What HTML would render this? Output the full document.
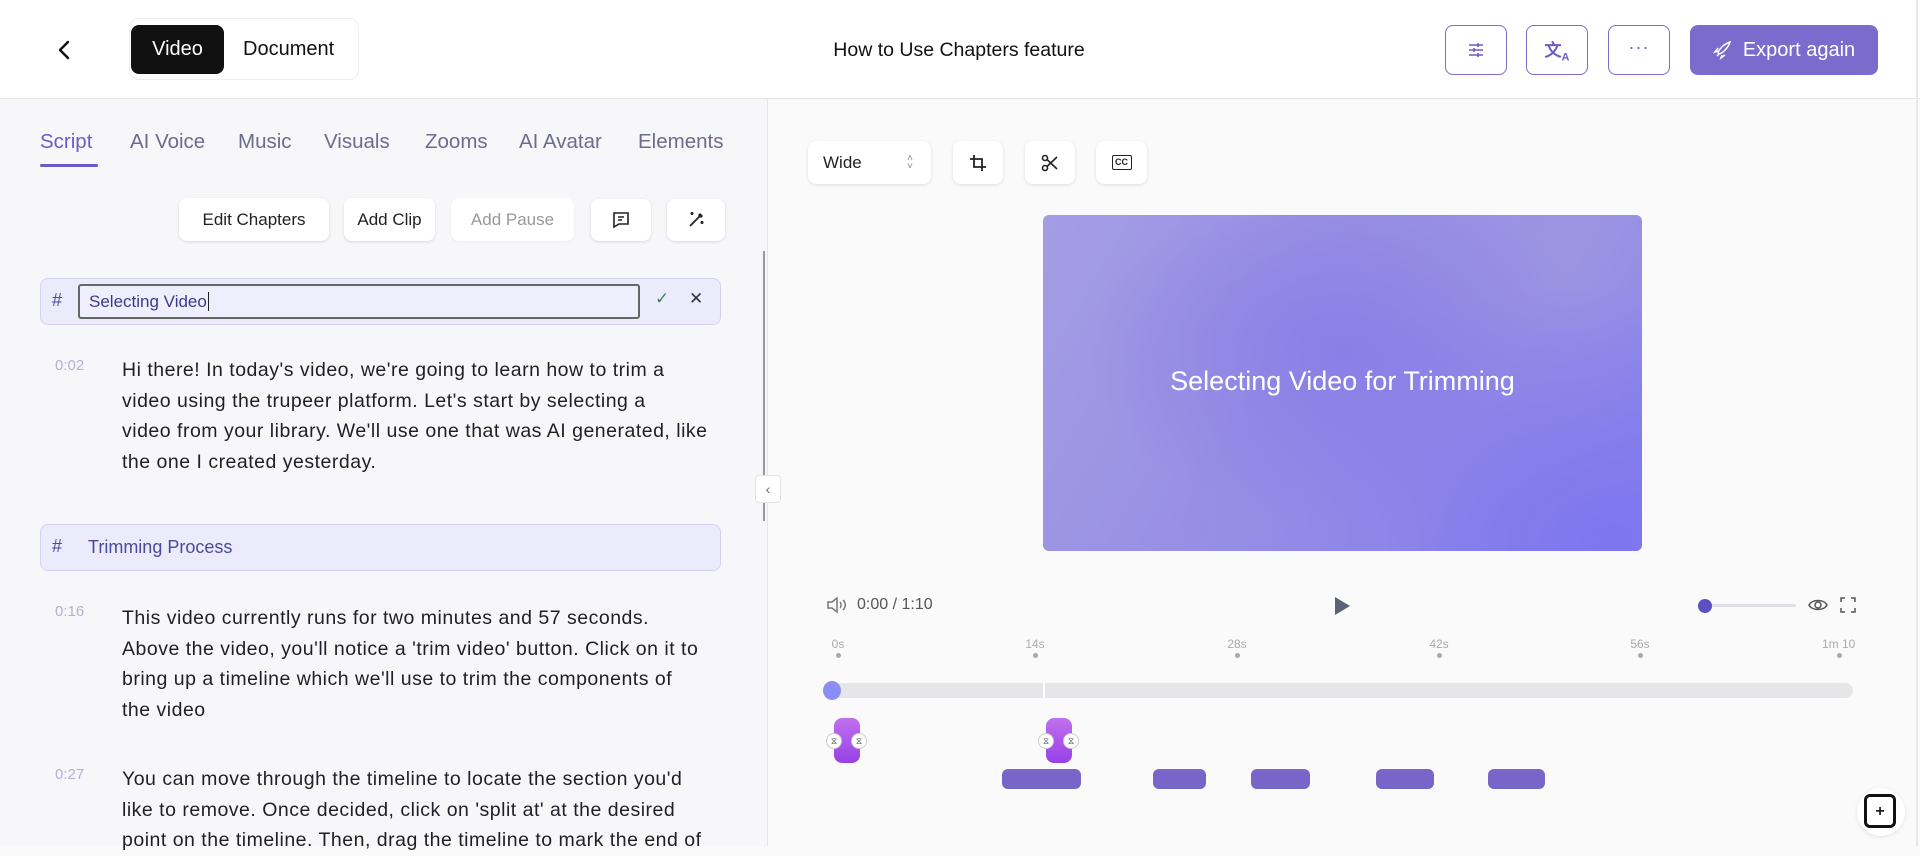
<!DOCTYPE html>
<html><head><meta charset="utf-8"><style>
*{box-sizing:border-box;margin:0;padding:0}
body{width:1920px;height:846px;overflow:hidden;font-family:"Liberation Sans",sans-serif;background:#fafafb;position:relative;color:#1e1e2a}
.a{position:absolute}
.hdr{left:0;top:0;width:1920px;height:99px;background:#fff;border-bottom:1px solid #e6e6ea}
.btn{position:absolute;background:#fff;border-radius:8px;box-shadow:0 1px 3px rgba(0,0,0,.12);display:flex;align-items:center;justify-content:center;font-size:17px;color:#222}
.ob{position:absolute;top:25px;width:62px;height:50px;border:1.5px solid #7a6cc8;border-radius:8px;background:#fff;display:flex;align-items:center;justify-content:center}
.tab{position:absolute;top:130px;font-size:20.5px;color:#6c6c8c}
.p{position:absolute;left:122px;font-size:19.5px;line-height:30.6px;color:#1f1f28;white-space:nowrap;letter-spacing:0.5px}
.ts{position:absolute;left:55px;font-size:15px;color:#b2b2d2}
.ch{position:absolute;left:40px;width:681px;height:47px;background:#ebebfb;border:1px solid #d4d2f4;border-radius:8px}
.tl{position:absolute;top:637px;font-size:12px;color:#aaa;width:40px;text-align:center}
.dot{position:absolute;top:653px;width:5px;height:5px;border-radius:50%;background:#aaa}
.blk{position:absolute;top:769px;height:20px;border-radius:6px;background:#7766c8}
.mk{position:absolute;top:718px;width:26px;height:45px;border-radius:8px;background:linear-gradient(#c071ee,#9840e6)}
.hd{position:absolute;top:733px;width:16px;height:16px;border-radius:50%;background:#fff;border:1px solid #ccc;font-size:9px;text-align:center;line-height:14px;color:#555}
</style></head><body>
<div class="a hdr">
 <svg class="a" style="left:56px;top:40px" width="18" height="20" viewBox="0 0 18 20"><path d="M12 2L4 10l8 8" fill="none" stroke="#111" stroke-width="2.4" stroke-linecap="round" stroke-linejoin="round"/></svg>
 <div class="a" style="left:129px;top:18px;width:230px;height:62px;border:1px solid #eee;border-radius:10px;background:#fff"></div>
 <div class="a" style="left:131px;top:25px;width:93px;height:49px;background:#111;border-radius:8px;color:#fff;font-size:20px;display:flex;align-items:center;justify-content:center">Video</div>
 <div class="a" style="left:243px;top:38px;font-size:20px;color:#111">Document</div>
 <div class="a" style="left:0;width:1918px;top:39px;text-align:center;font-size:19.5px;color:#111">How to Use Chapters feature</div>
 <div class="ob" style="left:1445px"><svg width="20" height="20" viewBox="0 0 20 20" stroke="#6b5bc4" stroke-width="1.6"><path d="M3 5h14M3 10h14M3 15h14"/><path d="M12 3v4M8 8v4M12 13v4"/></svg></div>
 <div class="ob" style="left:1526px"><span style="color:#6b5bc4;font-size:17px;font-weight:bold">文<sub style="font-size:11px">A</sub></span></div>
 <div class="ob" style="left:1608px"><span style="color:#6b5bc4;font-size:18px;letter-spacing:1px;margin-top:-6px">···</span></div>
 <div class="a" style="left:1690px;top:25px;width:188px;height:50px;background:#7a6bcc;border-radius:8px;color:#fff;font-size:20px;display:flex;align-items:center;justify-content:center;gap:10px"><svg width="20" height="20" viewBox="0 0 20 20" fill="none" stroke="#fff" stroke-width="1.5"><path d="M6 14c4-1 9-6 11-12-6 2-11 7-12 11zM5 11l-3 1 3-4M9 15l-1 3 4-3M4 16l2-2"/></svg>Export again</div>
</div>
<div class="a" style="left:1916px;top:0;width:2px;height:846px;background:#e8e8ea"></div>
<div class="a" style="left:767px;top:99px;width:1px;height:747px;background:#e6e6ea"></div>
<div class="a" style="left:0;top:99px;width:767px;height:747px;background:#f7f7f9"></div>
<div class="tab" style="left:40px;color:#6b5bc4">Script</div>
<div class="a" style="left:40px;top:164px;width:58px;height:3px;background:#6b5bc4;border-radius:2px"></div>
<div class="tab" style="left:130px">AI Voice</div>
<div class="tab" style="left:238px">Music</div>
<div class="tab" style="left:324px">Visuals</div>
<div class="tab" style="left:425px">Zooms</div>
<div class="tab" style="left:519px">AI Avatar</div>
<div class="tab" style="left:638px">Elements</div>
<div class="btn" style="left:179px;top:198px;width:150px;height:43px">Edit Chapters</div>
<div class="btn" style="left:344px;top:198px;width:91px;height:43px">Add Clip</div>
<div class="btn" style="left:451px;top:198px;width:123px;height:43px;color:#999;box-shadow:0 1px 2px rgba(0,0,0,.05)">Add Pause</div>
<div class="btn" style="left:591px;top:199px;width:60px;height:42px"><svg width="20" height="20" viewBox="0 0 20 20" fill="none" stroke="#222" stroke-width="1.6"><path d="M3 3h14v11H8l-5 3z"/><path d="M7 7h6M7 10h4"/></svg></div>
<div class="btn" style="left:667px;top:199px;width:58px;height:42px"><svg width="20" height="20" viewBox="0 0 20 20" fill="none" stroke="#222" stroke-width="1.8"><path d="M4 16L14 6"/><path d="M13 4l3 3" stroke-width="3"/><path d="M6 2v3M4.5 3.5h3M16 11v3M14.5 12.5h3"/></svg></div>
<div class="a" style="left:763px;top:251px;width:2px;height:270px;background:#999"></div>
<div class="a" style="left:755px;top:475px;width:26px;height:28px;background:#fff;border:1px solid #e4e4e8;border-radius:4px;font-size:14px;color:#666;text-align:center;line-height:26px">‹</div>
<div class="ch" style="top:278px"></div>
<div class="a" style="left:52px;top:290px;font-size:18px;color:#4a4a9a">#</div>
<div class="a" style="left:78px;top:284px;width:562px;height:35px;border:2px solid #666;border-radius:3px;background:#eeeefc;font-size:17px;color:#3b3b8a;padding:6px 9px">Selecting Video<span style="border-left:1.5px solid #222;margin-left:1px"></span></div>
<div class="a" style="left:655px;top:289px;font-size:17px;color:#3a8a5a">✓</div>
<div class="a" style="left:689px;top:289px;font-size:17px;color:#333">✕</div>
<div class="ts" style="top:357px">0:02</div>
<div class="p" style="top:355px">Hi there! In today's video, we're going to learn how to trim a<br>video using the trupeer platform. Let's start by selecting a<br>video from your library. We'll use one that was AI generated, like<br>the one I created yesterday.</div>
<div class="ch" style="top:524px"></div>
<div class="a" style="left:52px;top:536px;font-size:18px;color:#4a4a9a">#</div>
<div class="a" style="left:88px;top:537px;font-size:18px;color:#4a4a9a">Trimming Process</div>
<div class="ts" style="top:603px">0:16</div>
<div class="p" style="top:603px">This video currently runs for two minutes and 57 seconds.<br>Above the video, you'll notice a 'trim video' button. Click on it to<br>bring up a timeline which we'll use to trim the components of<br>the video</div>
<div class="ts" style="top:766px">0:27</div>
<div class="p" style="top:764px">You can move through the timeline to locate the section you'd<br>like to remove. Once decided, click on 'split at' at the desired<br>point on the timeline. Then, drag the timeline to mark the end of</div>
<div class="btn" style="left:808px;top:141px;width:123px;height:43px;justify-content:flex-start;padding-left:15px">Wide<span style="position:absolute;right:18px;font-size:10px;color:#888;line-height:8px">˄<br>˅</span></div>
<div class="btn" style="left:953px;top:141px;width:50px;height:43px"><svg width="18" height="18" viewBox="0 0 18 18" fill="none" stroke="#222" stroke-width="1.8"><path d="M5 1v12h12M1 5h12v12"/></svg></div>
<div class="btn" style="left:1025px;top:141px;width:50px;height:43px"><svg width="18" height="18" viewBox="0 0 18 18" fill="none" stroke="#222" stroke-width="1.6"><circle cx="4" cy="4" r="2.5"/><circle cx="4" cy="14" r="2.5"/><path d="M6 5.5L16 15M6 12.5L16 3"/></svg></div>
<div class="btn" style="left:1096px;top:141px;width:51px;height:43px"><div style="width:20px;height:15px;border:1.6px solid #222;border-radius:2px;font-size:9px;text-align:center;line-height:12px;font-weight:bold">CC</div></div>
<div class="a" style="left:1043px;top:215px;width:599px;height:336px;border-radius:6px;background:radial-gradient(ellipse at 95% 95%,#7e76ee 0%,rgba(126,118,238,0) 55%),radial-gradient(ellipse at 50% 40%,#8a7fe6 0%,rgba(0,0,0,0) 60%),linear-gradient(120deg,#a49de4,#9990e4 40%,#9c94e2 70%,#8a82ec);display:flex;align-items:center;justify-content:center;color:#fff;font-size:27px;padding-bottom:4px">Selecting Video for Trimming</div>
<svg class="a" style="left:826px;top:596px" width="22" height="18" viewBox="0 0 22 18" fill="none" stroke="#777" stroke-width="1.5"><path d="M2 6h4l5-4v14l-5-4H2z"/><path d="M14 6c1.5 1.5 1.5 4.5 0 6M17 4c3 3 3 7 0 10"/></svg>
<div class="a" style="left:857px;top:596px;font-size:16px;color:#555">0:00 / 1:10</div>
<svg class="a" style="left:1333px;top:596px" width="18" height="20"><path d="M2 1l15 9-15 9z" fill="#5a6478"/></svg>
<div class="a" style="left:1705px;top:604px;width:91px;height:3px;background:#e0e0e4;border-radius:2px"></div>
<div class="a" style="left:1698px;top:599px;width:14px;height:14px;border-radius:50%;background:#5b4fc4"></div>
<svg class="a" style="left:1808px;top:596px" width="20" height="18" fill="none" stroke="#555" stroke-width="1.5"><path d="M1 9c3-6 15-6 18 0-3 6-15 6-18 0z"/><circle cx="10" cy="9" r="3"/></svg>
<svg class="a" style="left:1840px;top:597px" width="16" height="16" fill="none" stroke="#555" stroke-width="1.5"><path d="M1 5V1h4M11 1h4v4M15 11v4h-4M5 15H1v-4"/></svg>
<div class="tl" style="left:818px">0s</div><div class="dot" style="left:836px"></div>
<div class="tl" style="left:1015px">14s</div><div class="dot" style="left:1033px"></div>
<div class="tl" style="left:1217px">28s</div><div class="dot" style="left:1235px"></div>
<div class="tl" style="left:1419px">42s</div><div class="dot" style="left:1437px"></div>
<div class="tl" style="left:1620px">56s</div><div class="dot" style="left:1638px"></div>
<div class="tl" style="left:1822px;text-align:left">1m 10</div><div class="dot" style="left:1837px"></div>
<div class="a" style="left:831px;top:683px;width:1022px;height:15px;border-radius:8px;background:#e6e6e8"></div>
<div class="a" style="left:1043px;top:683px;width:2px;height:15px;background:#fff"></div>
<div class="a" style="left:823px;top:681px;width:18px;height:19px;border-radius:50%;background:#8c8cf5"></div>
<div class="mk" style="left:834px"></div><div class="hd" style="left:826px">⧖</div><div class="hd" style="left:851px">⧖</div>
<div class="mk" style="left:1046px"></div><div class="hd" style="left:1038px">⧖</div><div class="hd" style="left:1063px">⧖</div>
<div class="blk" style="left:1002px;width:79px"></div>
<div class="blk" style="left:1153px;width:53px"></div>
<div class="blk" style="left:1251px;width:59px"></div>
<div class="blk" style="left:1376px;width:58px"></div>
<div class="blk" style="left:1488px;width:57px"></div>
<div class="a" style="left:1857px;top:788px;width:48px;height:48px;border-radius:50%;background:#fff;box-shadow:0 1px 4px rgba(0,0,0,.1)"></div>
<div class="a" style="left:1864px;top:794px;width:32px;height:34px;border:3px solid #111;border-radius:6px;font-size:16px;font-weight:bold;text-align:center;line-height:30px">+</div>
</body></html>
